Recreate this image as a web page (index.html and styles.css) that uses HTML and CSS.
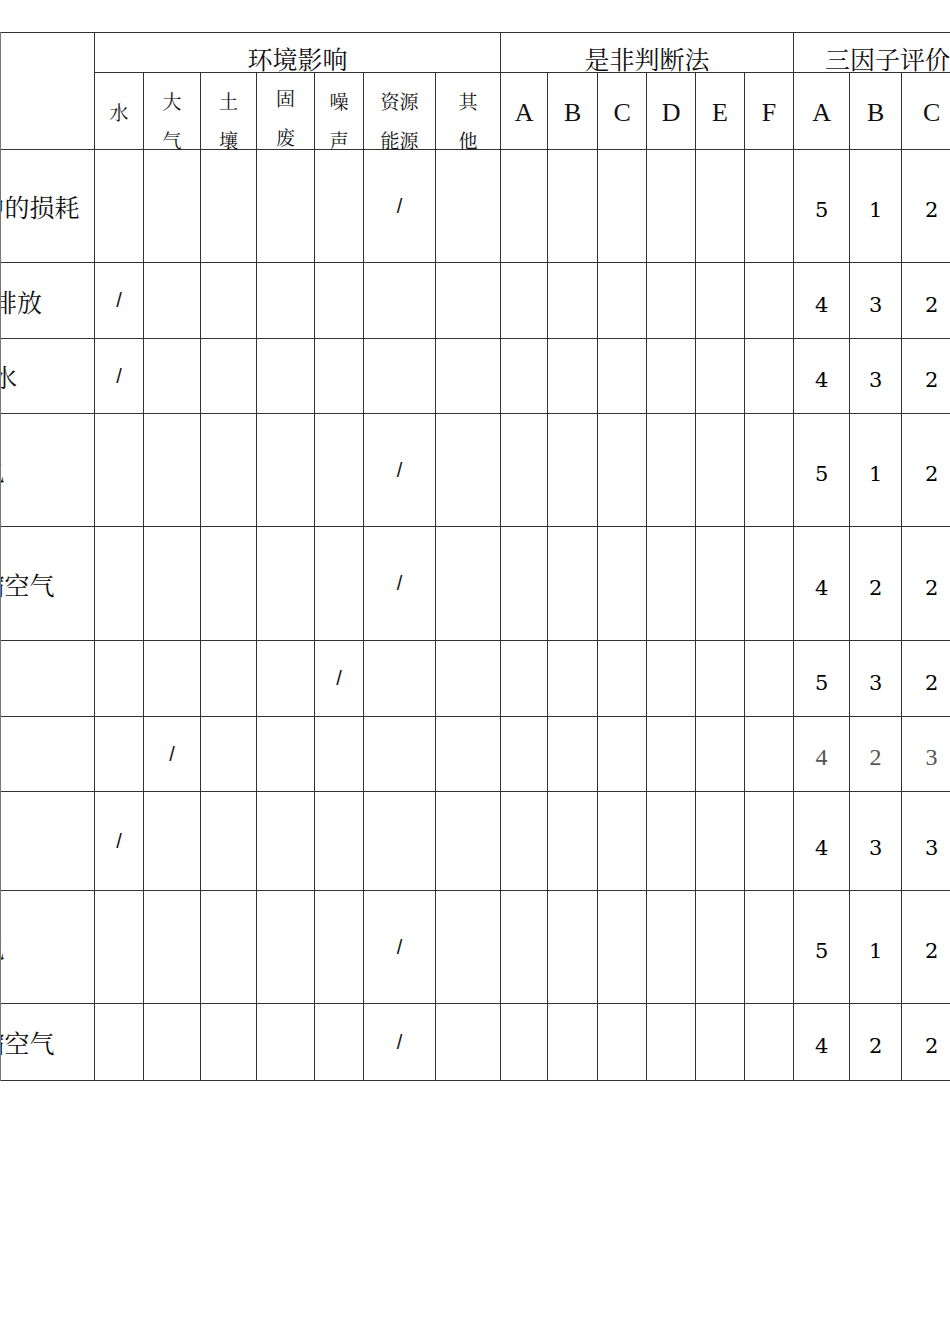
FILE: index.html
```html
<!DOCTYPE html>
<html lang="zh">
<head>
<meta charset="utf-8">
<title>环境因素评价表</title>
<link rel="stylesheet" href="styles.css">
</head>
<body>
<div class="page">
<table class="grid">
  <colgroup>
    <col class="c0">
    <col style="width:49px"><col style="width:57px"><col style="width:56px"><col style="width:58px"><col style="width:49px"><col style="width:72px"><col style="width:65px">
    <col style="width:47px"><col style="width:50px"><col style="width:49px"><col style="width:49px"><col style="width:49px"><col style="width:49px">
    <col style="width:56px"><col style="width:52px"><col style="width:60px">
  </colgroup>
  <thead>
    <tr class="h1">
      <th rowspan="2" class="blank"></th>
      <th colspan="7" class="group">环境影响</th>
      <th colspan="6" class="group">是非判断法</th>
      <th colspan="3" class="group left">三因子评价</th>
    </tr>
    <tr class="h2">
      <th class="one"><div class="lbl single">水</div></th>
      <th class="two"><div class="lbl">大<br>气</div></th>
      <th class="two"><div class="lbl">土<br>壤</div></th>
      <th class="two"><div class="lbl up">固<br>废</div></th>
      <th class="two"><div class="lbl">噪<br>声</div></th>
      <th class="two"><div class="lbl">资源<br>能源</div></th>
      <th class="two"><div class="lbl">其<br>他</div></th>
      <th class="lat">A</th><th class="lat">B</th><th class="lat">C</th><th class="lat">D</th><th class="lat">E</th><th class="lat">F</th>
      <th class="lat">A</th><th class="lat">B</th><th class="lat">C</th>
    </tr>
  </thead>
  <tbody>
    <tr class="r113"><td class="name">物料使用中的损耗</td><td></td><td></td><td></td><td></td><td></td><td class="sl">/</td><td></td><td></td><td></td><td></td><td></td><td></td><td></td><td class="num">5</td><td class="num">1</td><td class="num">2</td></tr>
    <tr class="r76"><td class="name">废水的排放</td><td class="sl">/</td><td></td><td></td><td></td><td></td><td></td><td></td><td></td><td></td><td></td><td></td><td></td><td></td><td class="num">4</td><td class="num">3</td><td class="num">2</td></tr>
    <tr class="r75"><td class="name">自来水</td><td class="sl">/</td><td></td><td></td><td></td><td></td><td></td><td></td><td></td><td></td><td></td><td></td><td></td><td></td><td class="num">4</td><td class="num">3</td><td class="num">2</td></tr>
    <tr class="r113"><td class="name">用电</td><td></td><td></td><td></td><td></td><td></td><td class="sl">/</td><td></td><td></td><td></td><td></td><td></td><td></td><td></td><td class="num">5</td><td class="num">1</td><td class="num">2</td></tr>
    <tr class="r114"><td class="name">使用压缩空气</td><td></td><td></td><td></td><td></td><td></td><td class="sl">/</td><td></td><td></td><td></td><td></td><td></td><td></td><td></td><td class="num">4</td><td class="num">2</td><td class="num">2</td></tr>
    <tr class="r76"><td class="name"></td><td></td><td></td><td></td><td></td><td class="sl">/</td><td></td><td></td><td></td><td></td><td></td><td></td><td></td><td></td><td class="num">5</td><td class="num">3</td><td class="num">2</td></tr>
    <tr class="r75"><td class="name"></td><td></td><td class="sl">/</td><td></td><td></td><td></td><td></td><td></td><td></td><td></td><td></td><td></td><td></td><td></td><td class="num thin">4</td><td class="num thin">2</td><td class="num thin">3</td></tr>
    <tr class="r99"><td class="name"></td><td class="sl">/</td><td></td><td></td><td></td><td></td><td></td><td></td><td></td><td></td><td></td><td></td><td></td><td></td><td class="num low">4</td><td class="num low">3</td><td class="num low">3</td></tr>
    <tr class="r113"><td class="name">用电</td><td></td><td></td><td></td><td></td><td></td><td class="sl">/</td><td></td><td></td><td></td><td></td><td></td><td></td><td></td><td class="num">5</td><td class="num">1</td><td class="num">2</td></tr>
    <tr class="r77"><td class="name">使用压缩空气</td><td></td><td></td><td></td><td></td><td></td><td class="sl">/</td><td></td><td></td><td></td><td></td><td></td><td></td><td></td><td class="num">4</td><td class="num">2</td><td class="num">2</td></tr>
  </tbody>
</table>
</div>
</body>
</html>
```

FILE: styles.css
```css
html, body {
  margin: 0;
  padding: 0;
  background: #ffffff;
}

body {
  font-family: "Noto Serif CJK SC", "Noto Sans CJK SC", serif;
  color: #111;
}

.page {
  margin-top: 32px;
  width: 949px;
  overflow: hidden;
  border-left: 1px solid #777;
}

.grid {
  border-collapse: collapse;
  table-layout: fixed;
  width: 1087px;
  margin-left: -127px;
}

.c0 { width: 220px; }

.grid th,
.grid td {
  border: 1px solid #333;
  padding: 0;
  text-align: center;
  font-weight: normal;
  overflow: visible;
}

.h1 { height: 40px; }
.h2 { height: 77px; }

.group {
  font-size: 25px;
  line-height: 28px;
  vertical-align: bottom;
  padding-bottom: 0;
  white-space: nowrap;
}

.group.left {
  text-align: left;
  padding-left: 31px;
}

.h2 th { vertical-align: top; }

.lbl {
  font-size: 19px;
  line-height: 39px;
  height: 68px;
  padding-top: 8px;
}

.lbl.up { padding-top: 5px; height: 71px; }

.lbl.single {
  padding-top: 19px;
  height: 57px;
}

.h2 th.lat {
  vertical-align: middle;
  font-family: "Liberation Serif", serif;
  font-size: 26px;
  padding-top: 3px;
}

.r113 { height: 113px; }
.r114 { height: 114px; }
.r99 { height: 99px; }
.r77 { height: 77px; }
.r76 { height: 76px; }
.r75 { height: 75px; }

.grid td.name {
  font-size: 25px;
  white-space: nowrap;
  vertical-align: middle;
  padding-right: 10px;
}

.sl {
  font-family: "Liberation Sans", sans-serif;
  font-size: 20px;
  vertical-align: middle;
}

.grid td.num {
  font-family: "DejaVu Serif", serif;
  font-size: 21px;
  vertical-align: middle;
  padding-top: 8px;
  color: #000;
}

.grid td.num.thin {
  font-family: "Liberation Serif", serif;
  font-size: 24px;
  color: #555;
  padding-top: 6px;
}

.grid td.num.low { padding-top: 14px; }
```
